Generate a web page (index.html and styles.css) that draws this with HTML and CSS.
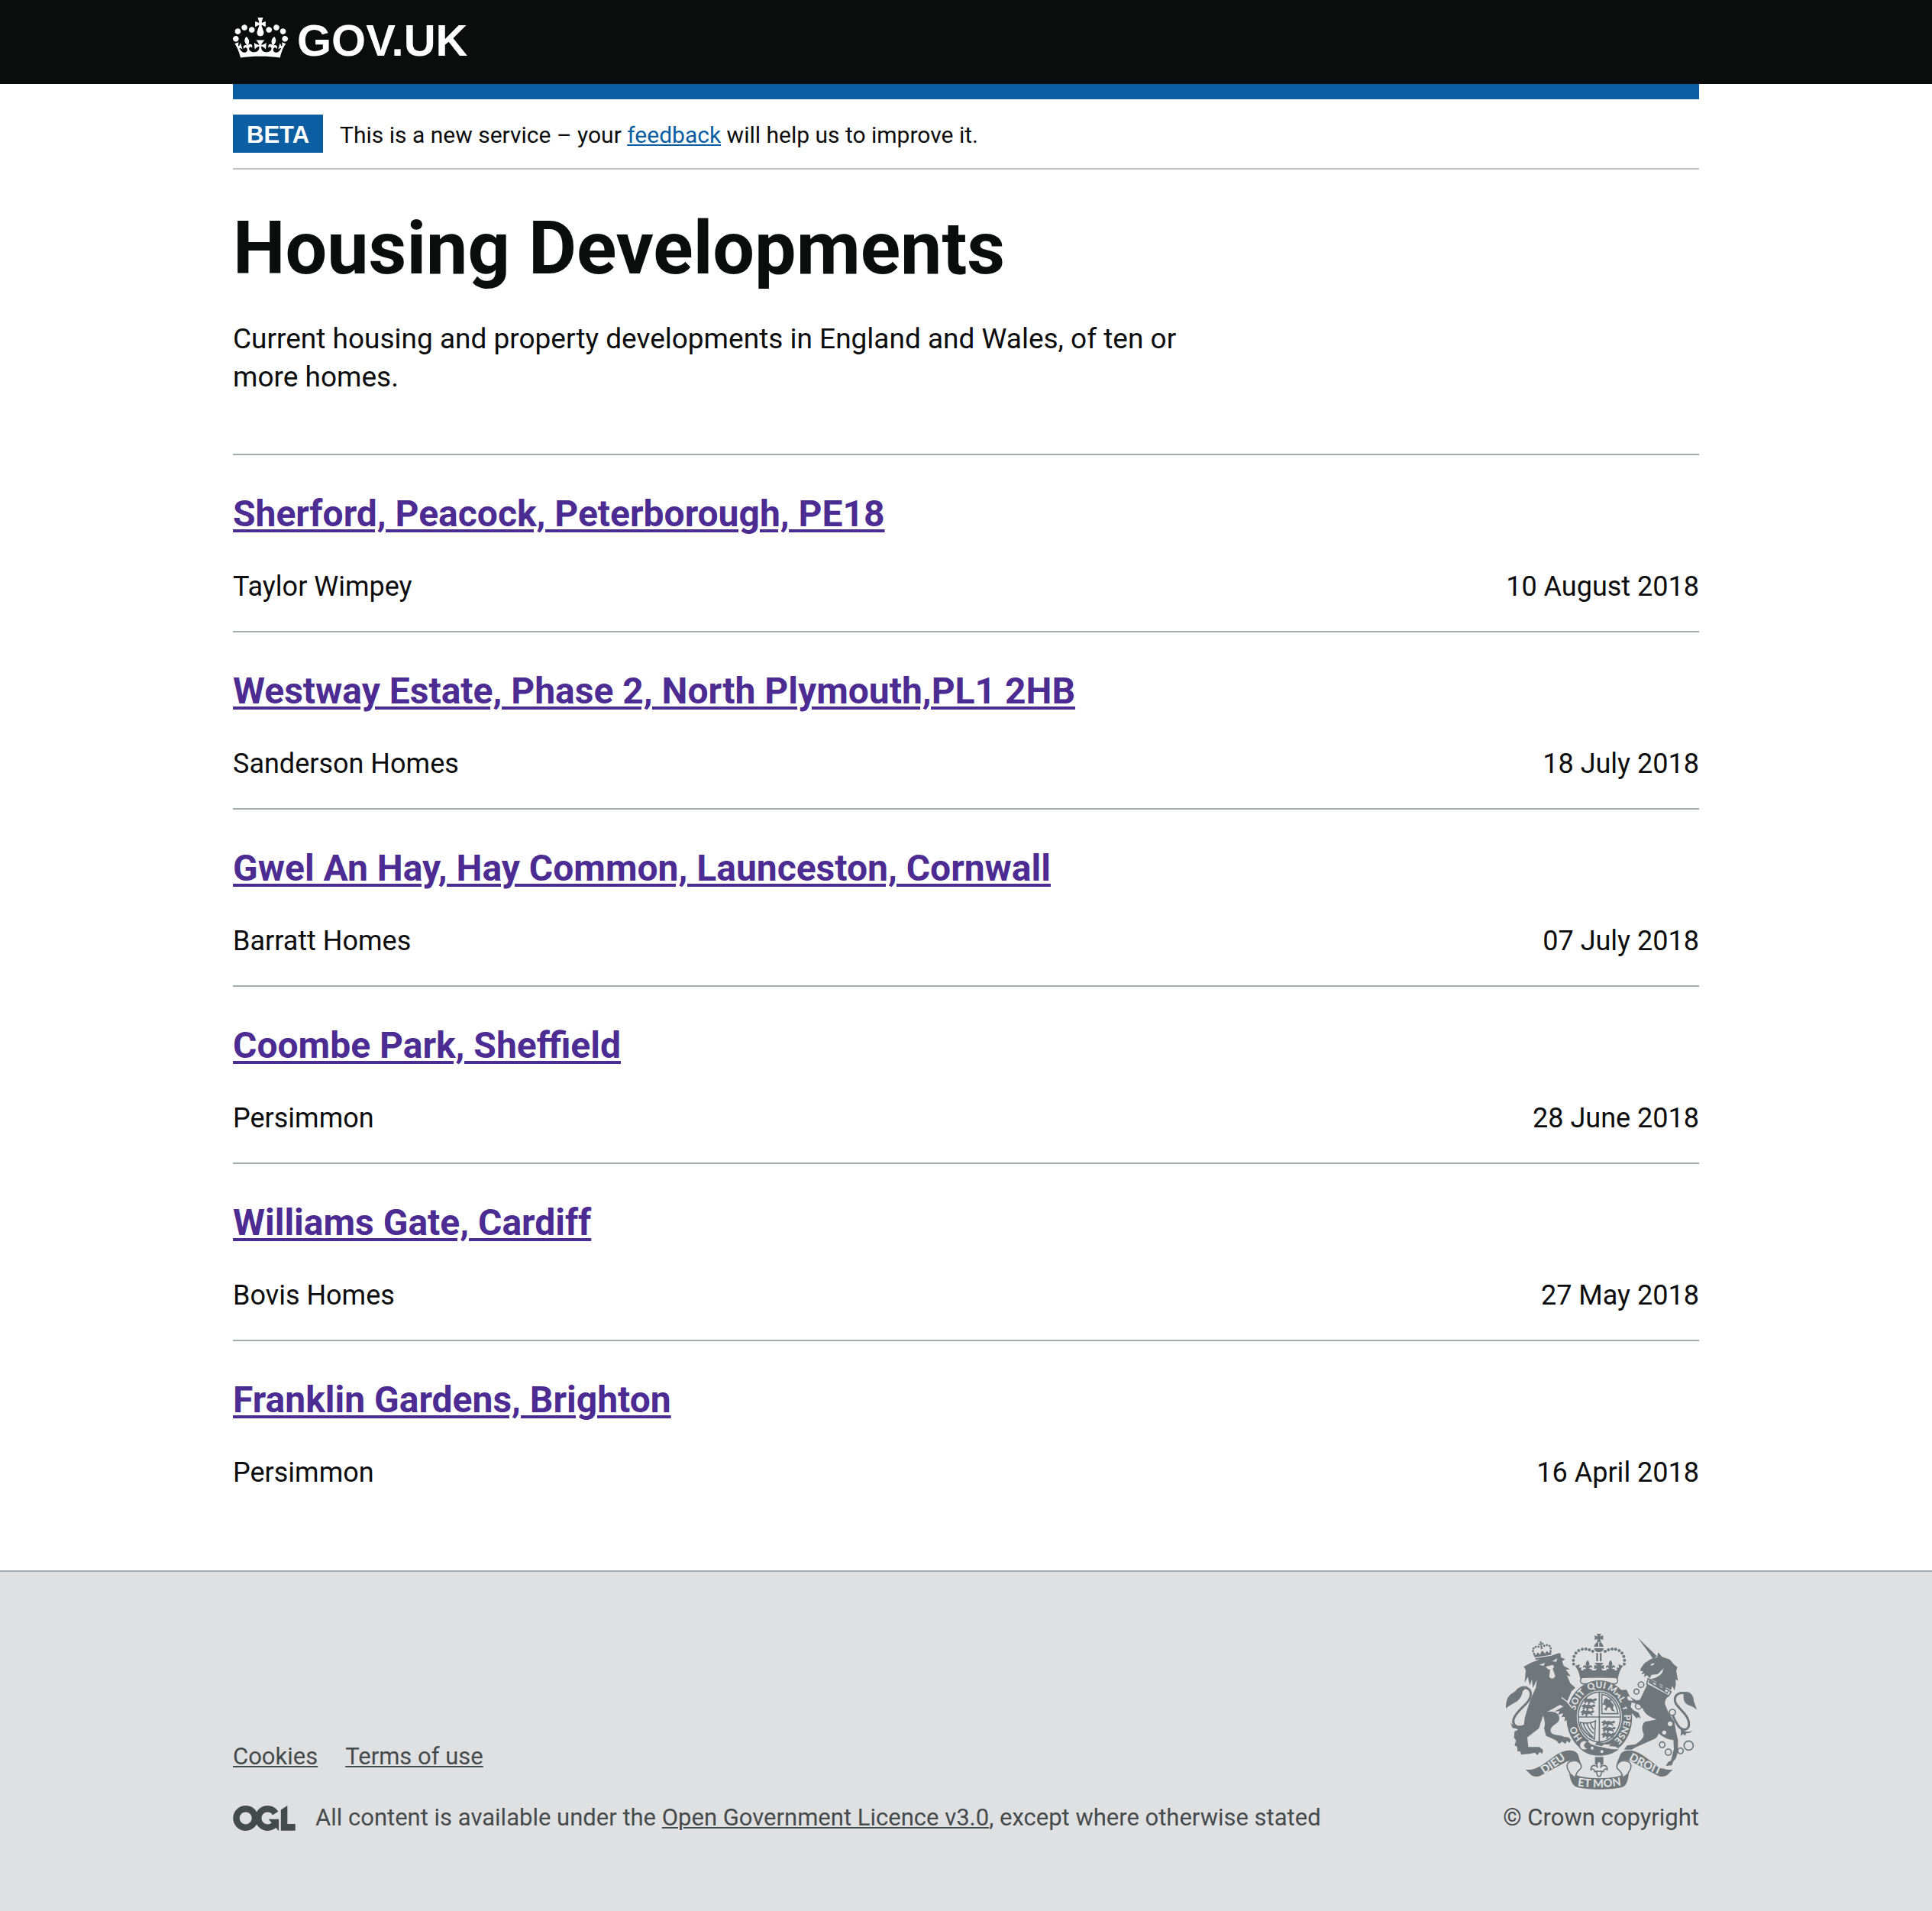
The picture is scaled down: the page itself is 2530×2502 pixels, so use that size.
FILE: index.html
```html
<!DOCTYPE html>
<html lang="en">
<head>
<meta charset="utf-8">
<meta name="viewport" content="width=device-width, initial-scale=1">
<title>Housing Developments - GOV.UK</title>
<link rel="stylesheet" href="styles.css">
</head>
<body>
<header class="header">
  <div class="container">
    <a class="header-logo" href="#">
      <svg class="header-crown" viewBox="0 0 132 97" aria-hidden="true"><path fill="currentColor" fill-rule="evenodd" d="M25 30.2c3.5 1.5 7.7-.2 9.1-3.7 1.5-3.6-.2-7.8-3.9-9.2-3.6-1.4-7.6.3-9.1 3.9-1.4 3.5.3 7.5 3.9 9zM9 39.5c3.6 1.5 7.8-.2 9.2-3.7 1.5-3.6-.2-7.8-3.9-9.1-3.6-1.5-7.6.2-9.1 3.8-1.4 3.5.3 7.5 3.8 9zM4.4 57.2c3.5 1.5 7.7-.2 9.1-3.8 1.5-3.6-.2-7.7-3.9-9.1-3.5-1.5-7.6.3-9.1 3.8-1.4 3.5.3 7.6 3.9 9.1zm38.3-21.4c3.5 1.5 7.7-.2 9.1-3.8 1.5-3.6-.2-7.7-3.9-9.1-3.6-1.5-7.6.3-9.1 3.8-1.3 3.6.4 7.7 3.9 9.1zm64.4-5.6c-3.6 1.5-7.8-.2-9.1-3.7-1.5-3.6.2-7.8 3.8-9.2 3.6-1.4 7.7.3 9.2 3.9 1.3 3.5-.4 7.5-3.9 9zm15.9 9.3c-3.6 1.5-7.7-.2-9.1-3.7-1.5-3.6.2-7.8 3.7-9.1 3.6-1.5 7.7.2 9.2 3.8 1.5 3.5-.3 7.5-3.8 9zm4.7 17.7c-3.6 1.5-7.8-.2-9.2-3.8-1.5-3.6.2-7.7 3.9-9.1 3.6-1.5 7.7.3 9.2 3.8 1.3 3.5-.4 7.6-3.9 9.1zM89.3 35.8c-3.6 1.5-7.8-.2-9.2-3.8-1.4-3.6.2-7.7 3.9-9.1 3.6-1.5 7.7.3 9.2 3.8 1.4 3.6-.3 7.7-3.9 9.1zM69.7 17.7l8.9 4.7V9.3l-8.9 2.8c-.2-.3-.5-.6-.9-.9L72.4 0H59.6l3.5 11.2c-.3.3-.6.5-.9.9l-8.8-2.8v13.1l8.8-4.7c.3.3.6.7.9.9l-5 15.4v.1c-.2.8-.4 1.6-.4 2.4 0 4.1 3.1 7.5 7 8.1h.2c.3 0 .7.1 1 .1.4 0 .7 0 1-.1h.2c4-.6 7.1-4.1 7.1-8.1 0-.8-.1-1.7-.4-2.4V34l-5.1-15.4c.4-.2.7-.6 1-.9zM66 92.8c16.9 0 32.8 1.1 47.1 3.2 4-16.9 8.9-26.7 14-33.5l-9.6-3.4c1 4.9 1.1 7.2 0 10.2-1.5-1.4-3-4.3-4.2-8.7L108.6 76c2.8-2 5-3.2 7.5-3.3-4.4 9.4-10 11.9-13.6 11.2-4.3-.8-6.3-4.6-5.6-7.9 1-4.7 5.7-5.9 8-.5 4.3-8.7-3-11.4-7.6-8.8 7.1-7.2 7.9-13.5 2.1-21.1-8 6.1-8.1 12.3-4.5 20.8-4.7-5.4-12.1-2.5-9.5 6.2 3.4-5.2 7.9-2 7.2 3.1-.6 4.3-6.4 7.8-13.5 7.2-10.3-.9-10.9-8-11.2-13.8 2.5-.5 7.1 1.8 11 7.3L80.2 60c-4.1 4.4-8 5.3-12.3 5.4 1.4-4.4 8-11.6 8-11.6H55.5s6.4 7.2 7.9 11.6c-4.2-.1-8-1-12.3-5.4l1.4 16.4c3.9-5.5 8.5-7.7 10.9-7.3-.3 5.8-.9 12.8-11.1 13.8-7.2.6-12.9-2.9-13.5-7.2-.7-5 3.8-8.3 7.1-3.1 2.7-8.7-4.6-11.6-9.4-6.2 3.7-8.5 3.6-14.7-4.6-20.8-5.8 7.6-5 13.9 2.2 21.1-4.7-2.6-11.9.1-7.7 8.8 2.3-5.5 7.1-4.2 8.1.5.7 3.3-1.3 7.1-5.7 7.9-3.5.7-9-1.8-13.5-11.2 2.5.1 4.7 1.3 7.5 3.3l-4.7-15.4c-1.2 4.4-2.7 7.2-4.3 8.7-1.1-3-.9-5.3 0-10.2l-9.5 3.4c5 6.9 9.9 16.7 14 33.5 14.8-2.1 30.8-3.2 47.7-3.2z"/></svg>
      <span>GOV.UK</span>
    </a>
  </div>
</header>

<div class="container">
  <div class="phase-banner">
    <strong class="phase-tag">BETA</strong>
    <span class="phase-text">This is a new service – your <a class="link" href="#">feedback</a> will help us to improve it.</span>
  </div>

  <main>
    <h1 class="title">Housing Developments</h1>
    <p class="intro">Current housing and property developments in England and Wales, of ten or more homes.</p>

    <ul class="developments">
      <li class="development">
        <h2 class="development-title"><a href="#">Sherford, Peacock, Peterborough, PE18</a></h2>
        <div class="development-meta"><span>Taylor Wimpey</span><time datetime="2018-08-10">10 August 2018</time></div>
      </li>
      <li class="development">
        <h2 class="development-title"><a href="#">Westway Estate, Phase 2, North Plymouth,PL1 2HB</a></h2>
        <div class="development-meta"><span>Sanderson Homes</span><time datetime="2018-07-18">18 July 2018</time></div>
      </li>
      <li class="development">
        <h2 class="development-title"><a href="#">Gwel An Hay, Hay Common, Launceston, Cornwall</a></h2>
        <div class="development-meta"><span>Barratt Homes</span><time datetime="2018-07-07">07 July 2018</time></div>
      </li>
      <li class="development">
        <h2 class="development-title"><a href="#">Coombe Park, Sheffield</a></h2>
        <div class="development-meta"><span>Persimmon</span><time datetime="2018-06-28">28 June 2018</time></div>
      </li>
      <li class="development">
        <h2 class="development-title"><a href="#">Williams Gate, Cardiff</a></h2>
        <div class="development-meta"><span>Bovis Homes</span><time datetime="2018-05-27">27 May 2018</time></div>
      </li>
      <li class="development">
        <h2 class="development-title"><a href="#">Franklin Gardens, Brighton</a></h2>
        <div class="development-meta"><span>Persimmon</span><time datetime="2018-04-16">16 April 2018</time></div>
      </li>
    </ul>
  </main>
</div>

<footer class="footer">
  <div class="container footer-inner">
    <div class="footer-main">
      <ul class="footer-links">
        <li><a href="#">Cookies</a></li>
        <li><a href="#">Terms of use</a></li>
      </ul>
      <div class="licence">
        <svg class="licence-logo" viewBox="0 0 483.2 195.7" aria-hidden="true"><path fill="currentColor" d="M421.5 142.8V.1l-50.7 32.3v161.1h112.4v-50.7zm-122.3-9.6A47.12 47.12 0 0 1 221 97.8c0-26 21.1-47.1 47.1-47.1 16.7 0 31.4 8.7 39.7 21.8l42.7-27.2A97.63 97.63 0 0 0 268.1 0c-36.5 0-68.3 20.1-85.1 49.7A98 98 0 0 0 97.8 0C43.9 0 0 43.9 0 97.8s43.9 97.8 97.8 97.8c36.5 0 68.3-20.1 85.1-49.7a97.76 97.76 0 0 0 149.6 25.4l19.4 22.2h3v-87.8h-80l24.3 27.5zM97.8 145c-26 0-47.1-21.1-47.1-47.1s21.1-47.1 47.1-47.1 47.1 21.1 47.1 47.1S123.8 145 97.8 145"/></svg>
        <span>All content is available under the <a href="#">Open Government Licence v3.0</a>, except where otherwise stated</span>
      </div>
    </div>
    <a class="copyright" href="#">
      <svg class="crest" viewBox="120 114 750 612" aria-hidden="true">
        <defs>
          <path id="garter" d="M487 554A97 113 0 0 1 487 328A97 113 0 0 1 487 554"/>
          <path id="dieu" d="M261 670Q310 642 364 600"/>
          <path id="etmon" d="M390 710Q486 726 585 707"/>
          <path id="droit" d="M594 604Q658 640 732 672"/>
          <g id="beast">
            <path d="M4 6l8-5 6 5 12-2 8 4 10-5 6 5-5 6-8 0 6 7-3 4-7-6-10 0-2 8-8 2 3-9-6-3-5 7-6-2 2-8-7-2z"/>
          </g>
          <g id="fleur">
            <path d="M0-22c9 9 9 17 3 25 8-9 17-5 15 6-5-7-11-3-11 4l9-1v8h-32v-8l9 1c0-7-6-11-11-4-2-11 7-15 15-6-6-8-6-16 3-25z"/>
          </g>
        </defs>
        <!-- royal crown -->
        <g class="ink">
          <path d="M477 114h17l-4 11 12-5v19l-12-5 4 12h-17l4-12-12 5v-19l12 5z"/>
          <path d="M466 165c3-12 9-18 17-19v19zM504 165c-3-12-9-18-17-19v19zM467 171h37c0 9-8 15-18 15s-19-6-19-15zM475 190h7v32h-7zM489 190h7v32h-7z"/>
          <g><circle cx="386" cy="233" r="6"/><circle cx="385" cy="218" r="6"/><circle cx="388" cy="203" r="6"/><circle cx="395" cy="190" r="6"/><circle cx="406" cy="180" r="6"/><circle cx="420" cy="175" r="6"/><circle cx="434" cy="174" r="6"/><circle cx="448" cy="177" r="6"/><circle cx="461" cy="183" r="6"/></g>
          <g transform="matrix(-1 0 0 1 971 0)"><circle cx="386" cy="233" r="6"/><circle cx="385" cy="218" r="6"/><circle cx="388" cy="203" r="6"/><circle cx="395" cy="190" r="6"/><circle cx="406" cy="180" r="6"/><circle cx="420" cy="175" r="6"/><circle cx="434" cy="174" r="6"/><circle cx="448" cy="177" r="6"/><circle cx="461" cy="183" r="6"/></g>
          <use href="#fleur" x="441" y="240"/><use href="#fleur" x="531" y="240"/>
          <path d="M468 228h36l-12 13 13-5v17l-10-4 5 12h-28l5-12-10 4v-17l13 5z"/>
          <path d="M392 240l18-6-3 14 10-2-2 12h142l-2-12 10 2-3-14 18 6c-12 16-17 32-20 50-44-10-104-10-148 0-3-18-8-34-20-50z"/>
        </g>
        <rect class="line" x="413" y="285" width="146" height="26" rx="13"/>
        <rect class="paper" x="416" y="289" width="140" height="17" rx="8"/>
        <!-- garter and shield -->
        <ellipse class="ink" cx="487" cy="444" rx="129" ry="147"/>
        <ellipse class="paper" cx="487" cy="441" rx="89" ry="104"/>
        <ellipse class="line" cx="487" cy="441" rx="83" ry="98"/>
        <path class="line" d="M487 341v202M402 441h170"/>
        <g class="ink">
          <use href="#beast" transform="translate(424 364)"/><use href="#beast" transform="translate(418 388)"/><use href="#beast" transform="translate(414 411)"/>
          <use href="#beast" transform="translate(496 452)"/><use href="#beast" transform="translate(498 476)"/><use href="#beast" transform="translate(496 499)"/>
          <path d="M506 372l10-6 8 8 10-4-2 10 12 14-4 14 10 12-14-4-8-14-10 4-4 12-8-8 8-10-6-8-10 2 6-10z"/>
        </g>
        <path class="line" d="M497 352c32 4 58 34 63 76h-63zM412 462c4 24 20 46 56 66l4-72c-18 12-38 10-60 6zM424 466c6 22 20 40 38 54M438 466c4 14 12 28 26 40M452 464c2 10 6 18 14 26"/>
        <g class="motto motto-ring">
          <text><textPath href="#garter" startOffset="15.5%">HO</textPath></text>
          <text><textPath href="#garter" startOffset="35%">SOIT</textPath></text>
          <text><textPath href="#garter" startOffset="48.5%">QUI</textPath></text>
          <text><textPath href="#garter" startOffset="60.5%">MAL</textPath></text>
          <text><textPath href="#garter" startOffset="70%">Y</textPath></text>
          <text><textPath href="#garter" startOffset="82%">PENSE</textPath></text>
        </g>
        <path class="paper" d="M448 532c30 14 56 20 84 16l-8 8c26 0 30 2 40 12l-10 6c-30-14-80-12-114-34z"/>
        <path class="ink" d="M440 544c40 24 80 24 124 24-24 18-50 26-78 25-26 0-48-7-66-20z"/>
        <path class="ink" d="M478 538l34 6-16 12-26-6z"/>
        <circle class="outlined" cx="428" cy="552" r="19"/><circle class="ink" cx="440" cy="552" r="13"/>
        <g class="paper"><circle cx="459" cy="563" r="6"/><circle cx="497" cy="577" r="6"/><circle cx="428" cy="542" r="4"/></g>
        <!-- lion -->
        <g class="ink">
          <path d="M220 227l22-8 14-8c24-4 46-12 72-21l7 2 1 15 17 7-12 8 6 18 25 14-17 1 20 26-15-3 13 30 20 18-15 14-18 42c18 14 32 38 37 62l-1 26-8-8-4 13-8-17-10 9-2-17-14 8 2-18-13 2 6-16-20 6 6-14-20 1c18-10 30-18 36-18l-14-8-22 12-30 16c20-4 48 0 49 24 1 20-22 24-31 38-6 10-4 18 4 24 14 8 32 4 46 12l18 2 8 10-5 12-10-8-6 12-14-10-10 10-12-14-40-18-8-28c6-20 2-36-4-52l-16 50-46 36 4 38 44 0 14 12-2 14-12-6-8 12-10-10-18 4-36 4-4-14-10 2-2-20-10-4 6-20-8-10 2-26 36-12 4-40 10-34 14-42 20-44 4-30-16 32-4-34-8 24-8-34-12 24 4-50-8-14z"/>
          <path d="M205 322c-18-4-36 0-48 18-12 8-24 14-30 26-4 12-8 24-7 42 10-10 26-18 40-26 16-10 24-26 26-42z"/>
          <path d="M138 463c14 18 40 20 66 4l-14 18-28 13 5-9-22-6z"/>
        </g>
        <path class="tail" d="M178 330c20-10 40 0 40 22 0 36-56 58-68 98-4 14 4 30 22 30 14 0 26-6 34-16"/>
        <path class="paper" d="M250 236l24-8-6 12zM302 222l20-12-4 14zM276 244l28-8 6 8-6 8 10 28c-4 12-18 14-24 2l4-26-10-4z"/>
        <path class="gap" d="M338 364l22 16 20 26"/>
        <g transform="rotate(-9 262 180)">
          <path class="ink" d="M226 188l10 6 8-10 8 10 8-12 4 0 8 12 8-10 8 10 10-6-6 24h-60z"/>
          <path class="beads" d="M230 188c-12-24 12-34 30-20M294 188c12-24-12-34-30-20"/>
          <path class="ink" d="M258 144h8l-2 8 8-2v8l-8-2 2 18h-8l2-18-8 2v-8l8 2z"/>
          <path class="gap" d="M228 204h68"/>
        </g>
        <!-- unicorn -->
        <g class="ink">
          <path d="M637 128l76 74-14 13-10-16z"/>
          <path d="M650 250l14-20 26-17 24-6 4-20 16 18 30 10 16 20 14 10-5 14 7 40-10-6 2 20-6 24-8-18-6 16-80-44c16 0 36-10 46-24l6-18-24 24-24 2-6 14-12-12-12 8 4-15-14 4 8-13-12-1z"/>
          <path d="M676 312l84 47c-10 6-18 20-14 34l14 34 22 32 6 38 8 34v46l-8 26-10 12-6 16-24 2 10-16 10-4 12-46-2-36c-22 0-44-12-58-26-4 16-14 24-30 28l-62 28-14 8h-30l12-16 34-5c16-12 30-20 32-38-10-24-8-38 4-50l46-9c-20-8-42-14-54-42l-14-16-30-10-4 18 10 12 22 12 8 22-10-6-6 6-16-18-16-10-14-28-2-16 34 2c-8-10-14-20-22-16l-4 10-12-12-24-12 12-12 24-1 14 28 24 14 14-2z"/>
          <path d="M818 344c22-8 40 10 40 34l12 34c-20-18-36-14-46-28-8-12-6-26-6-40z"/>
          <path d="M858 492c-16 10-38 12-54-12l4 18-2 18 10-8 8 7 4-10 14-2z"/>
        </g>
        <path class="paper" d="M688 234l16-6-4 9-10 2z"/>
        <path class="tail" d="M774 432c20 44 30 60 52 58 20-6 16-38-4-62-24-28-42-40-38-60 4-18 22-26 46-18"/>
        <path class="outlined" d="M679 290l90 52-10 16-86-46z"/>
        <path class="ink" d="M680 306l6-14 8 12 6-2-2 8 10 6 6-16 8 10 4 14 8 2 6-14 8 12-2 18 8 0 6-10-4 18z"/>
        <g class="ring"><circle cx="651" cy="314" r="11"/><circle cx="633" cy="341" r="10"/><circle cx="641" cy="398" r="12"/><circle cx="774" cy="423" r="12"/><circle cx="734" cy="550" r="11"/><circle cx="758" cy="579" r="12"/><circle cx="806" cy="574" r="11"/><circle cx="838" cy="553" r="18"/></g>
        <g class="paper"><circle cx="765" cy="468" r="9"/><circle cx="742" cy="502" r="8"/></g>
        <!-- ribbon -->
        <g class="ink">
          <path d="M197 647c26 4 50-6 74-24l48-34c30-20 70-24 84-2l13 43c-14-20-36-22-56-14l-98 52c-14 8-28 10-42 2z"/>
          <path d="M776 647c-26 4-50-6-74-24l-48-34c-30-20-70-24-84-2l-17 43c14-20 40-22 60-14l98 52c14 8 28 10 42 2z"/>
          <path d="M368 656c50 34 186 34 236 0-4 26-6 52-26 60-40 12-140 12-180 0-20-8-26-34-30-60z"/>
          <path d="M470 598h33v30h-33z"/>
        </g>
        <path class="outlined" d="M372 661c-22-28-10-46 12-48 22-2 34 14 32 26-4 12-18 10-23 38"/>
        <path class="outlined" d="M600 661c22-28 10-46-12-48-22-2-34 14-32 26 4 12 18 10 23 38"/>
        <path class="outlined" d="M486 612c10 10 10 20 5 28 10-14 28-10 27 8-8-6-14 0-15 8h-8c0 10-4 18-9 19-5-1-9-9-9-19h-8c-1-8-7-14-15-8-1-18 17-22 27-8-5-8-5-18 5-28z"/>
        <path class="line" d="M472 654h28"/>
        <g class="motto motto-ribbon">
          <text><textPath href="#dieu" startOffset="50%">DIEU</textPath></text>
          <text><textPath href="#etmon" startOffset="50%">ET MON</textPath></text>
          <text><textPath href="#droit" startOffset="50%">DROIT</textPath></text>
        </g>
      </svg>
      <span>© Crown copyright</span>
    </a>
  </div>
</footer>
</body>
</html>
```
FILE: styles.css
```css
* {
  box-sizing: border-box;
}

body {
  margin: 0;
  background: #fff;
  color: #0b0c0c;
  font-family: Roboto, "Liberation Sans", sans-serif;
  font-size: 36px;
  line-height: 50px;
}

h1,
h2,
p,
ul {
  margin: 0;
  padding: 0;
}

ul {
  list-style: none;
}

a {
  text-underline-offset: 2px;
  text-decoration-thickness: 2px;
}

.container {
  max-width: 1984px;
  margin: 0 auto;
  padding: 0 32px;
}

/* Header */

.header {
  background: #0b0c0c;
}

.header-logo {
  display: flex;
  align-items: center;
  gap: 12px;
  height: 110px;
  padding-bottom: 12px;
  color: #fff;
  font-family: "Liberation Sans", Arial, sans-serif;
  font-size: 58px;
  font-weight: 700;
  line-height: 60px;
  text-decoration: none;
}

.header-logo span {
  padding-top: 8px;
}

.header-crown {
  width: 72px;
  height: 53px;
}

/* Phase banner */

.phase-banner {
  display: flex;
  align-items: baseline;
  gap: 22px;
  padding: 20px 0;
  border-top: 20px solid #0b5ea2;
  border-bottom: 2px solid #bfc1c3;
}

.phase-tag {
  padding: 4px 18px 0;
  background: #0b5ea2;
  color: #fff;
  font-family: "Liberation Sans", Arial, sans-serif;
  font-size: 31px;
  line-height: 46px;
}

.phase-text {
  font-size: 30px;
  line-height: 40px;
}

.link {
  color: #0b5ea2;
}

/* Page content */

.title {
  margin-top: 53px;
  font-size: 97px;
  line-height: 100px;
}

.intro {
  max-width: 1280px;
  margin: 44px 0 75px;
  font-size: 37px;
}

.developments {
  margin-bottom: 70px;
}

.development {
  padding: 47px 0 33px;
  border-top: 2px solid #a1acb2;
}

.development-title {
  margin-bottom: 40px;
  font-size: 48px;
  line-height: 60px;
}

.development-title a {
  color: #4c2c92;
  text-underline-offset: 4px;
  text-decoration-thickness: 4px;
}

.development-meta {
  display: flex;
  justify-content: space-between;
}

/* Footer */

.footer {
  padding: 81px 0 102px;
  border-top: 2px solid #a1acb2;
  background: #dee0e2;
  color: #454a4c;
  font-size: 31px;
  line-height: 40px;
}

.footer a {
  color: inherit;
}

.footer-inner {
  display: flex;
  justify-content: space-between;
  align-items: flex-end;
}

.footer-links {
  display: flex;
  gap: 36px;
  margin-bottom: 40px;
}

.licence {
  display: flex;
  align-items: center;
  gap: 26px;
}

.licence-logo {
  width: 82px;
  height: 33px;
}

.copyright {
  display: flex;
  flex-direction: column;
  align-items: center;
  gap: 17px;
  text-decoration: none;
}

.crest {
  width: 250px;
  height: 204px;
}

/* Royal coat of arms */

.ink {
  fill: #6f777b;
}

.paper {
  fill: #dee0e2;
}

.line,
.ring,
.tail {
  fill: none;
  stroke: #6f777b;
  stroke-width: 5px;
}

.tail {
  stroke-width: 9px;
}

.outlined {
  fill: #dee0e2;
  stroke: #6f777b;
  stroke-width: 5px;
}

.gap {
  fill: none;
  stroke: #dee0e2;
  stroke-width: 4px;
}

.beads {
  fill: none;
  stroke: #6f777b;
  stroke-width: 8px;
  stroke-linecap: round;
  stroke-dasharray: 1px 10px;
}

.motto {
  fill: #dee0e2;
  font-family: Lato, sans-serif;
  font-weight: 900;
  text-anchor: middle;
}

.motto-ring {
  font-size: 36px;
}

.motto-ribbon {
  font-size: 44px;
}
```
